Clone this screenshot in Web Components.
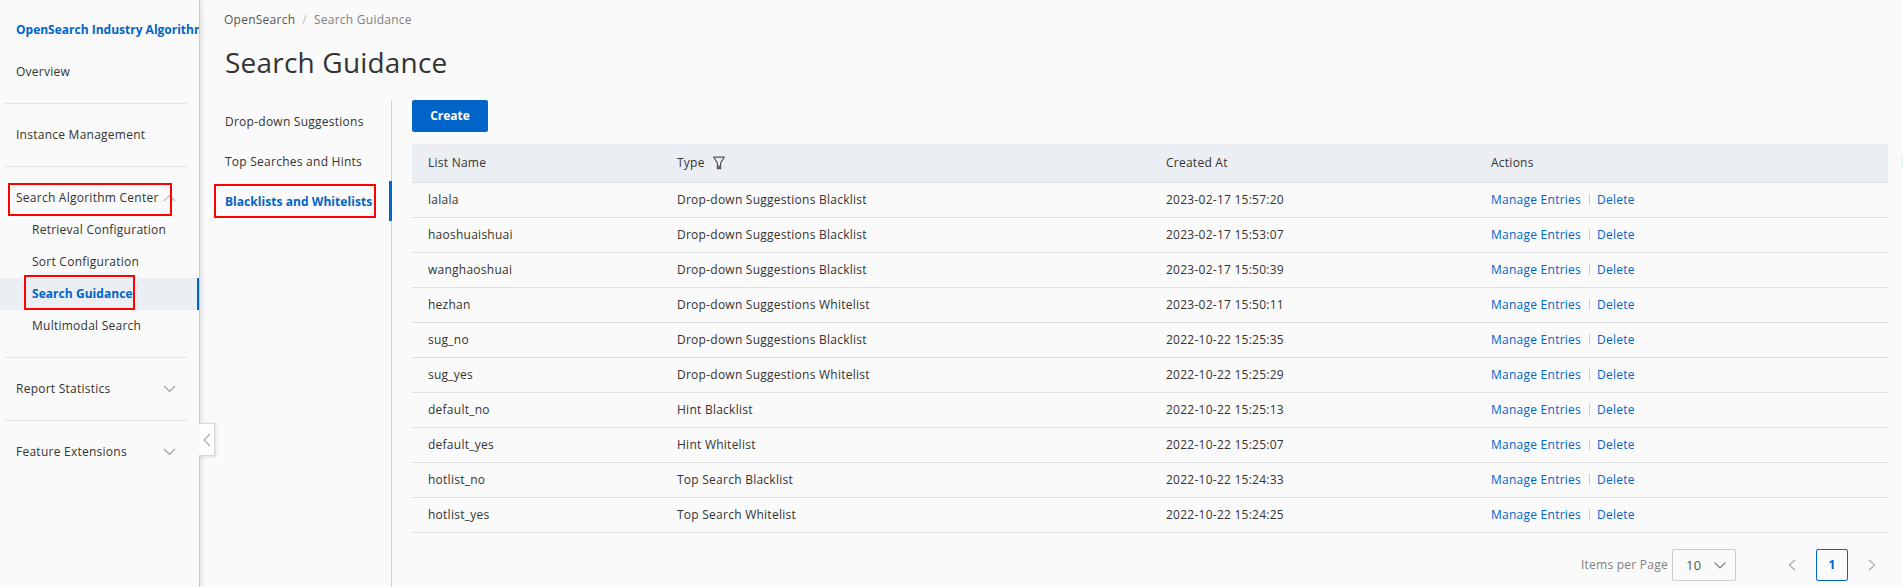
<!DOCTYPE html>
<html lang="en">
<head>
<meta charset="utf-8">
<title>Search Guidance</title>
<style>
  html,body{margin:0;height:587px;overflow:hidden;background:#fafafa}
  body{font:12px/18px "Open Sans","Noto Sans",sans-serif;letter-spacing:.25px;color:#333;display:flex;position:relative}
  .float-dot{position:absolute;left:1901px;top:150px;width:24px;height:24px;border-radius:50%;background:#d9f7f8}
</style>
</head>
<body>
<os-sidebar>
  <span slot="title">OpenSearch Industry Algorithm</span>
  <nav-group><nav-item>Overview</nav-item></nav-group>
  <nav-group><nav-item>Instance Management</nav-item></nav-group>
  <nav-group>
    <nav-item chevron="up" marked>Search Algorithm Center</nav-item>
    <nav-item sub>Retrieval Configuration</nav-item>
    <nav-item sub>Sort Configuration</nav-item>
    <nav-item sub active marked>Search Guidance</nav-item>
    <nav-item sub>Multimodal Search</nav-item>
  </nav-group>
  <nav-group><nav-item chevron="down">Report Statistics</nav-item></nav-group>
  <nav-group><nav-item chevron="down">Feature Extensions</nav-item></nav-group>
</os-sidebar>
<os-page crumb-root="OpenSearch" crumb-current="Search Guidance" heading="Search Guidance">
  <os-tabs slot="tabs">
    <os-tab>Drop-down Suggestions</os-tab>
    <os-tab>Top Searches and Hints</os-tab>
    <os-tab active>Blacklists and Whitelists</os-tab>
  </os-tabs>
  <os-button>Create</os-button>
  <os-table></os-table>
  <os-pager></os-pager>
</os-page>
<div class="float-dot"></div>
<script>
const css = (s) => `<style>${s}</style>`;

// sidebar
class OsSidebar extends HTMLElement {
  constructor(){
    super();
    this.attachShadow({mode:"open"}).innerHTML = css(`
      :host{display:block;position:relative;flex:none;width:200px;height:587px;box-sizing:border-box;
            background:#fafafa;border-right:1px solid #c9ccd0;box-shadow:2px 0 4px rgba(0,0,0,.1);z-index:2}
      .title{display:block;height:56px;padding:21px 0 0 16px;box-sizing:border-box;font-weight:700;letter-spacing:0;color:#0064c8;white-space:nowrap;overflow:hidden;width:199px}
      .handle{position:absolute;left:199px;top:423px;width:16px;height:33px;box-sizing:border-box;background:#fff;
              border:1px solid #d5d8dc;border-left:0;box-shadow:1px 1px 3px rgba(0,0,0,.12);display:flex;align-items:center;justify-content:center}
    `) + `<div class="title"><slot name="title"></slot></div><slot></slot>
      <div class="handle"><svg width="8" height="14" viewBox="0 0 8 14" fill="none" stroke="#a9aeb5" stroke-width="1.2"><path d="M7 1 1 7l6 6"/></svg></div>`;
  }
}
class NavGroup extends HTMLElement {
  constructor(){
    super();
    this.attachShadow({mode:"open"}).innerHTML = css(`
      :host{display:block;padding:0 0 16px;margin-bottom:15px;position:relative}
      :host::after{content:"";position:absolute;left:4px;width:183px;bottom:0;height:1px;background:#e3e4e6}
      :host(:last-child)::after{display:none}
    `) + `<slot></slot>`;
  }
}
class NavItem extends HTMLElement {
  constructor(){
    super();
    const ch = this.getAttribute("chevron");
    const icon = ch ? `<svg class="chev" width="13" height="8" viewBox="0 0 13 8" fill="none" stroke="${ch==="up"?"#b5b8bd":"#9a9fa6"}" stroke-width="1.2"><path d="${ch==="up"?"M1 7l5.5-5.5L12 7":"M1 1l5.5 5.5L12 1"}"/></svg>` : "";
    this.attachShadow({mode:"open"}).innerHTML = css(`
      :host{display:flex;align-items:center;height:32px;padding-left:16px;position:relative;white-space:nowrap;color:#333}
      :host([sub]){padding-left:32px}
      :host([active]){background:#ebeef3;color:#0064c8;font-weight:700;letter-spacing:.05px;box-shadow:inset -2px 0 0 #0064c8}
      .chev{position:absolute;left:163px;top:12px}
      .mark{display:none;position:absolute;border:2px solid #f00;box-sizing:border-box;pointer-events:none}
      :host([marked]) .mark{display:block;left:8px;top:1px;width:164px;height:33px}
      :host([marked][sub]) .mark{left:24px;top:-3px;width:111px;height:35px}
    `) + `<slot></slot>${icon}<span class="mark"></span>`;
  }
}

// page body
class OsPage extends HTMLElement {
  constructor(){
    super();
    this.attachShadow({mode:"open"}).innerHTML = css(`
      :host{display:block;flex:1;min-width:0;height:587px}
      .crumb{padding:11px 0 0 24px;height:18px;color:#808080}
      .crumb b{font-weight:400;color:#555}
      .crumb i{font-style:normal;color:#c1c1c1;margin:0 7px}
      h1{margin:13px 0 0;padding:0 0 0 25px;height:58px;font-size:28px;line-height:40px;font-weight:400;letter-spacing:.2px;color:#333}
      .body{display:flex;height:487px}
      .side{flex:none;width:192px}
      .panel{flex:1;min-width:0;padding:0 15px 0 20px}
    `) + `<div class="crumb"><b></b><i>/</i><span></span></div><h1></h1>
      <div class="body"><div class="side"><slot name="tabs"></slot></div><div class="panel"><slot></slot></div></div>`;
    const r = this.shadowRoot;
    r.querySelector(".crumb b").textContent = this.getAttribute("crumb-root");
    r.querySelector(".crumb span").textContent = this.getAttribute("crumb-current");
    r.querySelector("h1").textContent = this.getAttribute("heading");
  }
}
class OsTabs extends HTMLElement {
  constructor(){
    super();
    this.attachShadow({mode:"open"}).innerHTML = css(`
      :host{display:block;height:100%;box-sizing:border-box;border-right:1px solid #d0d2d6}
      .pad{height:1px}
    `) + `<div class="pad"></div><slot></slot>`;
  }
}
class OsTab extends HTMLElement {
  constructor(){
    super();
    this.attachShadow({mode:"open"}).innerHTML = css(`
      :host{display:flex;align-items:center;box-sizing:border-box;height:40px;padding:1px 0 0 25px;margin-right:-1px;white-space:nowrap;position:relative;color:#333}
      :host([active]){color:#0064c8;font-weight:700;letter-spacing:.05px;box-shadow:inset -3px 0 0 #0064c8}
      .mark{display:none;position:absolute;left:14px;top:3px;width:162px;height:34px;box-sizing:border-box;border:2px solid #f00}
      :host([active]) .mark{display:block}
    `) + `<slot></slot><span class="mark"></span>`;
  }
}
class OsButton extends HTMLElement {
  constructor(){
    super();
    this.attachShadow({mode:"open"}).innerHTML = css(`
      :host{display:flex;align-items:center;justify-content:center;width:76px;height:32px;background:#0064c8;color:#fff;font-weight:700;letter-spacing:0;border-radius:2px;margin-bottom:12px}
    `) + `<slot></slot>`;
  }
}

const ROWS = [
  ["lalala","Drop-down Suggestions Blacklist","2023-02-17 15:57:20"],
  ["haoshuaishuai","Drop-down Suggestions Blacklist","2023-02-17 15:53:07"],
  ["wanghaoshuai","Drop-down Suggestions Blacklist","2023-02-17 15:50:39"],
  ["hezhan","Drop-down Suggestions Whitelist","2023-02-17 15:50:11"],
  ["sug_no","Drop-down Suggestions Blacklist","2022-10-22 15:25:35"],
  ["sug_yes","Drop-down Suggestions Whitelist","2022-10-22 15:25:29"],
  ["default_no","Hint Blacklist","2022-10-22 15:25:13"],
  ["default_yes","Hint Whitelist","2022-10-22 15:25:07"],
  ["hotlist_no","Top Search Blacklist","2022-10-22 15:24:33"],
  ["hotlist_yes","Top Search Whitelist","2022-10-22 15:24:25"]
];

class OsTable extends HTMLElement {
  constructor(){
    super();
    const body = ROWS.map(r => `<tr>${r.map(c => `<td>${c}</td>`).join("")}<td><a>Manage Entries</a><i></i><a>Delete</a></td></tr>`).join("");
    this.attachShadow({mode:"open"}).innerHTML = css(`
      :host{display:block}
      table{border-collapse:separate;border-spacing:0;table-layout:fixed;width:1476px}
      th{background:#ebeef3;font-weight:400;text-align:left;height:39px;padding:0 0 0 16px;border-bottom:1px solid #dcdee1;box-sizing:border-box}
      td{height:35px;padding:0 0 0 16px;border-bottom:1px solid #dcdee1;box-sizing:border-box;white-space:nowrap}
      th svg{vertical-align:-3px;margin-left:8px}
      a{color:#0064c8}
      i{display:inline-block;width:1px;height:11px;background:#c9ccd0;margin:0 7.5px;vertical-align:-1px}
    `) + `<table><colgroup><col style="width:249px"><col style="width:489px"><col style="width:325px"><col style="width:413px"></colgroup>
      <thead><tr><th>List Name</th><th>Type<svg width="12" height="14" viewBox="0 0 12 14" fill="none" stroke="#555" stroke-width="1.2"><path d="M.8 1.2h10.4L7.6 7v5.6H4.4V7z"/><path d="M4.6 9.5h2.8v3H4.6z" fill="#666" stroke="none"/></svg></th><th>Created At</th><th>Actions</th></tr></thead>
      <tbody>${body}</tbody></table>`;
  }
}
class OsPager extends HTMLElement {
  constructor(){
    super();
    this.attachShadow({mode:"open"}).innerHTML = css(`
      :host{display:flex;align-items:center;justify-content:flex-end;height:32px;margin-top:16px;width:1476px;color:#808080}
      .size{display:flex;align-items:center;justify-content:space-between;box-sizing:border-box;width:64px;height:32px;margin-left:4px;padding:0 9px 0 13px;
            border:1px solid #c9ccd0;border-radius:2px;color:#555;font-size:13px}
      .nav{display:flex;align-items:center;justify-content:center;width:32px;height:32px}
      .cur{display:flex;align-items:center;justify-content:center;box-sizing:border-box;width:32px;height:32px;border:1px solid #0064c8;border-radius:2px;color:#0064c8;font-weight:700;letter-spacing:0;margin:0 8px}
      .prev{margin-left:40px}
    `) + `<span>Items per Page</span>
      <div class="size"><span>10</span><svg width="12" height="7" viewBox="0 0 12 7" fill="none" stroke="#6e7378" stroke-width="1.1"><path d="M.7.7 6 6l5.3-5.3"/></svg></div>
      <div class="nav prev"><svg width="8" height="12" viewBox="0 0 8 12" fill="none" stroke="#a9aeb5" stroke-width="1.2"><path d="M7 .7 1.5 6 7 11.3"/></svg></div>
      <div class="cur">1</div>
      <div class="nav"><svg width="8" height="12" viewBox="0 0 8 12" fill="none" stroke="#a9aeb5" stroke-width="1.2"><path d="M1 .7 6.5 6 1 11.3"/></svg></div>`;
  }
}

customElements.define("os-sidebar", OsSidebar);
customElements.define("nav-group", NavGroup);
customElements.define("nav-item", NavItem);
customElements.define("os-page", OsPage);
customElements.define("os-tabs", OsTabs);
customElements.define("os-tab", OsTab);
customElements.define("os-button", OsButton);
customElements.define("os-table", OsTable);
customElements.define("os-pager", OsPager);
</script>
</body>
</html>
